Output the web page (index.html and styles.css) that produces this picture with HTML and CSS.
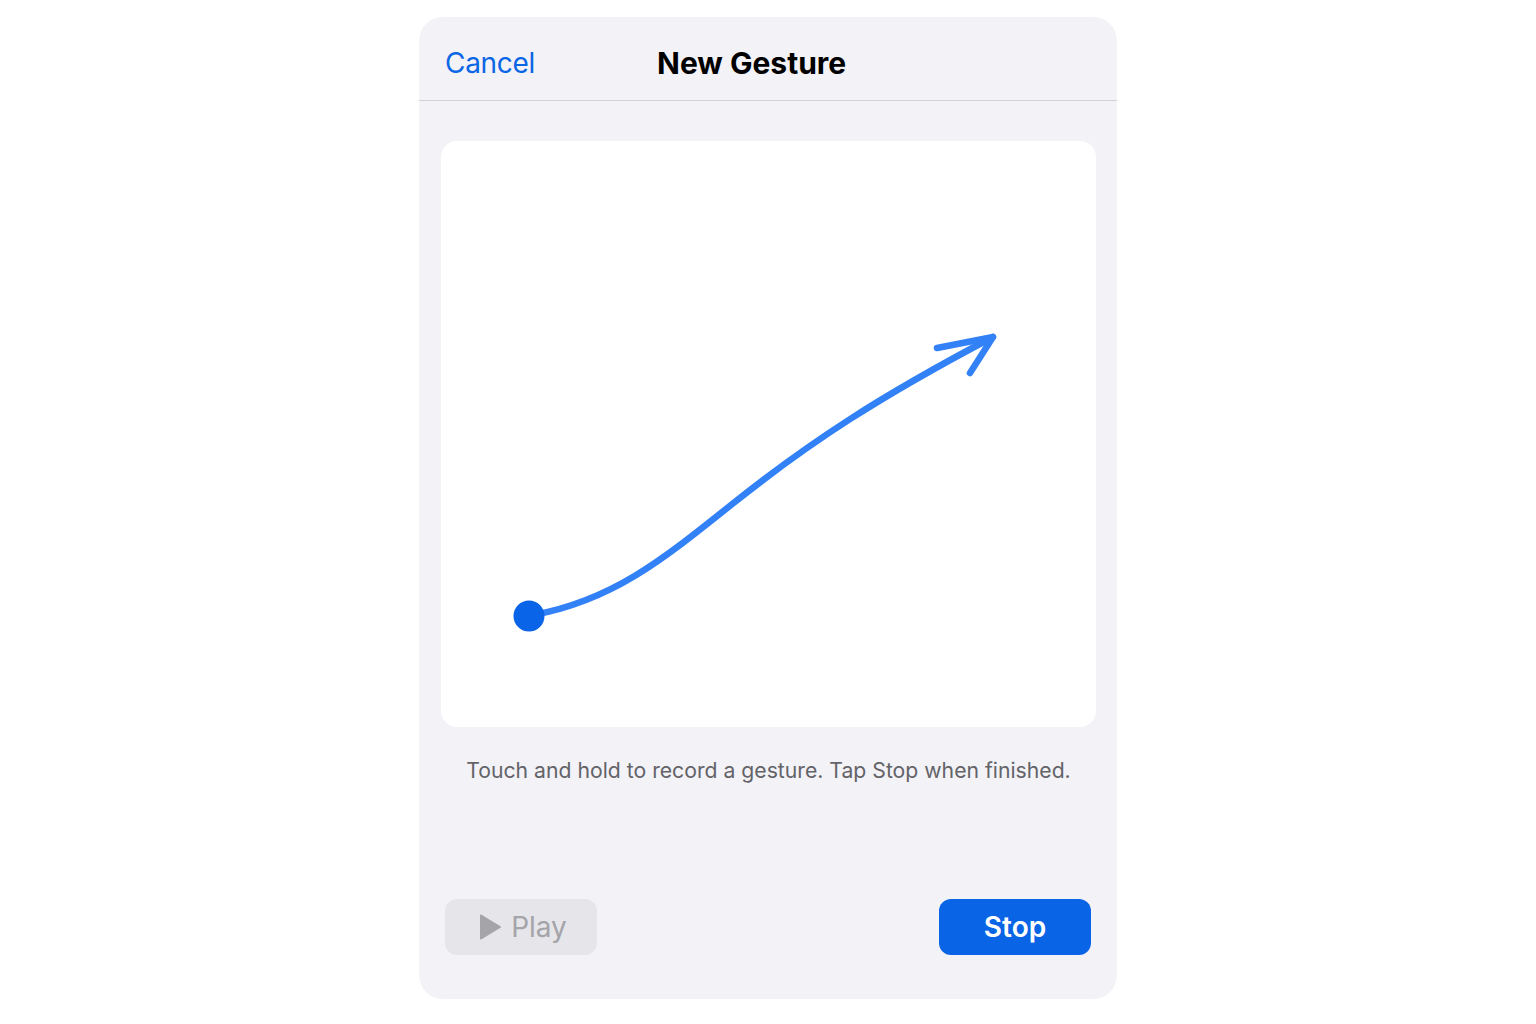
FILE: index.html
```html
<!DOCTYPE html>
<html lang="en">
<head>
<meta charset="utf-8">
<title>New Gesture</title>
<link rel="stylesheet" href="styles.css">
</head>
<body>
<div class="sheet">
  <header class="nav">
    <span class="cancel">Cancel</span>
    <span class="title">New Gesture</span>
  </header>
  <div class="body">
    <div class="canvas">
      <svg class="gesture" width="655" height="586" viewBox="0 0 655 586">
        <path d="M92,474 C170,460 220,420 290,364 C370,300 440,255 552,196" fill="none" stroke="#3381f6" stroke-width="6.5" stroke-linecap="round"/>
        <path d="M496,207 L552,196 L529,232" fill="none" stroke="#3381f6" stroke-width="6.5" stroke-linecap="round" stroke-linejoin="round"/>
        <circle cx="88" cy="475" r="15.5" fill="#0a64e8"/>
      </svg>
    </div>
    <p class="hint">Touch and hold to record a gesture. Tap Stop when finished.</p>
    <div class="actions">
      <button class="btn play"><svg class="play-icon" width="22" height="26" viewBox="0 0 22 26"><path d="M2,1.5 L21,13 L2,24.5 Z" fill="#a4a4a9" stroke="#a4a4a9" stroke-width="2" stroke-linejoin="round"/></svg><span>Play</span></button>
      <button class="btn stop">Stop</button>
    </div>
  </div>
</div>
</body>
</html>
```
FILE: styles.css
```css
* { box-sizing: border-box; }
html, body { margin: 0; padding: 0; background: #ffffff; }
body {
  width: 1536px;
  height: 1024px;
  font-family: Inter, "Liberation Sans", sans-serif;
  padding-top: 17px;
}
.sheet {
  width: 698px;
  height: 982px;
  margin-left: 419px;
  background: #f2f2f7;
  border-radius: 24px;
  overflow: hidden;
  display: flex;
  flex-direction: column;
}
.nav {
  height: 84px;
  border-bottom: 1.5px solid #d1d1d6;
  display: flex;
  align-items: center;
  padding-left: 26px;
  padding-top: 8px;
  gap: 122px;
}
.cancel {
  color: #0a66e4;
  font-size: 28px;
  font-weight: 400;
  letter-spacing: -0.3px;
}
.title {
  color: #000;
  font-size: 30px;
  font-weight: 700;
  letter-spacing: 0px;
}
.body {
  flex: 1;
  display: flex;
  flex-direction: column;
  padding: 40px 21px 44px 22px;
}
.canvas {
  width: 655px;
  height: 586px;
  background: #ffffff;
  border-radius: 16px;
  position: relative;
}
.gesture { display: block; }
.hint {
  margin: 30px 0 0;
  text-align: center;
  font-size: 21.2px;
  color: #636368;
  letter-spacing: 0px;
}
.actions {
  margin-top: auto;
  display: flex;
  justify-content: space-between;
  padding: 0 5px 0 4px;
}
.btn {
  width: 152px;
  height: 56px;
  border: none;
  border-radius: 12px;
  font-family: inherit;
  font-size: 28px;
  display: flex;
  align-items: center;
  justify-content: center;
  padding: 0;
}
.play {
  background: #e5e5ea;
  color: #a4a4a9;
  gap: 10px;
  padding-left: 4px;
}
.play-icon { display: block; }
.stop {
  background: #0a64e6;
  color: #ffffff;
  font-weight: 600;
}
```
